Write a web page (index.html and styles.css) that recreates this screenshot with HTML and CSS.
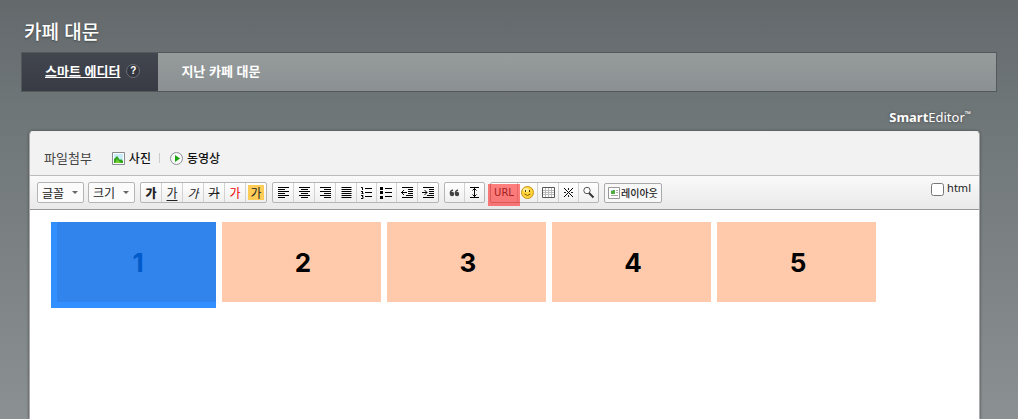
FILE: index.html
```html
<!DOCTYPE html>
<html lang="ko">
<head>
<meta charset="utf-8">
<title>카페 대문</title>
<link rel="stylesheet" href="styles.css">
</head>
<body>
<h1 class="page-title">카페 대문</h1>
<nav class="tabs">
  <div class="tab tab-active"><a class="tab-link" href="#smart">스마트 에디터</a><button class="help" type="button" aria-label="도움말">?</button></div>
  <div class="tab"><a class="tab-link" href="#past">지난 카페 대문</a></div>
</nav>
<div class="brand"><b>Smart</b><span>Editor</span><span class="tm">™</span></div>
<main class="editor">
  <div class="attach">
    <span class="attach-title">파일첨부</span>
    <button class="attach-btn" type="button">
      <svg width="13" height="13" viewBox="0 0 13 13"><path fill="#fff" stroke="#858b90" d="M.5.5h12v12H.5z"/><path fill="#c9ecfb" d="M2 2h9v9H2z"/><path fill="#30a51b" d="M2 11V7l3-3 3 4 1-1 2 2v2z"/><path fill="#74cc35" d="M3 11l2-4 4 4z"/></svg>사진
    </button>
    <span class="divider"></span>
    <button class="attach-btn" type="button">
      <svg width="13" height="13" viewBox="0 0 13 13"><circle cx="6.5" cy="6.5" r="6" fill="#f8f8f8" stroke="#8b9094"/><path fill="#18a50e" d="M5 3l5 3.500-5 3.500z"/></svg>동영상
    </button>
  </div>
  <div class="toolbar">
    <button class="drop" type="button">글꼴<i class="caret"></i></button>
    <button class="drop" type="button">크기<i class="caret"></i></button>
    <div class="group">
      <button type="button" class="tool bold">가</button>
      <button type="button" class="tool under">가</button>
      <button type="button" class="tool slant">가</button>
      <button type="button" class="tool strike">가</button>
      <button type="button" class="tool red">가</button>
      <button type="button" class="tool"><span class="mark">가</span></button>
    </div>
    <div class="group">
      <button type="button" class="tool" aria-label="왼쪽 정렬"><svg class="icon" viewBox="0 0 13 13"><path d="M1 1.500h11M1 3.500h7M1 5.500h11M1 7.500h7M1 9.500h11M1 11.500h7"/></svg></button>
      <button type="button" class="tool" aria-label="가운데 정렬"><svg class="icon" viewBox="0 0 13 13"><path d="M1 1.500h11M3 3.500h7M1 5.500h11M3 7.500h7M1 9.500h11M3 11.500h7"/></svg></button>
      <button type="button" class="tool" aria-label="오른쪽 정렬"><svg class="icon" viewBox="0 0 13 13"><path d="M1 1.500h11M5 3.500h7M1 5.500h11M5 7.500h7M1 9.500h11M5 11.500h7"/></svg></button>
      <button type="button" class="tool" aria-label="양쪽 정렬"><svg class="icon" viewBox="0 0 13 13"><path d="M1.500 1.500h10M1.500 3.500h10M1.500 5.500h10M1.500 7.500h10M1.500 9.500h10M1.500 11.500h10"/></svg></button>
      <button type="button" class="tool narrow" aria-label="번호 목록"><svg class="icon" viewBox="0 0 13 13"><path d="M5 2.500h7M5 6.500h7M5 10.500h7M1 1.500h1.500V4M1 5.500h2M2.500 6v1M1.500 7.500h2M1 9.500h2v1H2M3 11v1.500H1"/></svg></button>
      <button type="button" class="tool narrow" aria-label="글머리 목록"><svg class="icon" viewBox="0 0 13 13"><path d="M5 2.500h7M5 6.500h7M5 10.500h7"/><path fill="#000" stroke="none" d="M0 1h3v3H0zM0 5h3v3H0zM0 10h3v3H0z"/></svg></button>
      <button type="button" class="tool" aria-label="내어쓰기"><svg class="icon" viewBox="0 0 13 13"><path d="M1 1.500h11M7 3.500h5M7 5.500h5M7 7.500h5M5 9.500h7M1 11.500h11M0 6.500h6M3 4L.5 6.500 3 9"/></svg></button>
      <button type="button" class="tool" aria-label="들여쓰기"><svg class="icon" viewBox="0 0 13 13"><path d="M1 1.500h11M7 3.500h5M7 5.500h5M7 7.500h5M5 9.500h7M1 11.500h11M0 6.500h5M2.500 4L5 6.500 2.500 9"/></svg></button>
    </div>
    <div class="group">
      <button type="button" class="tool narrow" aria-label="인용구"><svg class="icon" viewBox="0 0 13 13"><g fill="#444" stroke="none"><circle cx="4" cy="8" r="2.200"/><circle cx="9" cy="8" r="2.200"/></g><path stroke="#444" stroke-width="1.300" d="M2.500 8C2 6 3 4.500 5 4M7.500 8C7 6 8 4.500 10 4"/></svg></button>
      <button type="button" class="tool narrow" aria-label="줄간격"><svg class="icon" viewBox="0 0 13 13"><path d="M2 1.500h9M2 11.500h9M6.500 2v9M4.500 4.500l2-2 2 2M4.500 8.500l2 2 2-2"/></svg></button>
    </div>
    <div class="group">
      <button type="button" class="tool url">URL</button>
      <button type="button" class="tool narrow" aria-label="이모티콘"><svg class="icon face" viewBox="0 0 13 13"><circle cx="6.500" cy="6.500" r="6" fill="#ffd63c" stroke="#c88e18"/><ellipse cx="5" cy="4" rx="3" ry="2" fill="#fff09a" stroke="none"/><path fill="#5b3500" stroke="none" d="M4 4h1v2H4zM8 4h1v2H8z"/><path stroke="#8b5200" d="M3.500 8Q6.500 11 9.500 8"/></svg></button>
      <button type="button" class="tool" aria-label="표"><svg class="icon" viewBox="0 0 13 13"><path fill="#fff" stroke="none" d="M0 1h13v11H0z"/><path stroke="#bbb" d="M3.500 2v9M6.500 2v9M9.500 2v9M1 4.500h11M1 6.500h11M1 8.500h11"/><path stroke="#555" d="M.5 1.500h12v10H.5z"/></svg></button>
      <button type="button" class="tool narrow" aria-label="특수문자"><svg class="icon" viewBox="0 0 13 13"><path d="M2 2l9 9M11 2l-9 9"/><path fill="#222" stroke="none" d="M6 2h1v2H6zM6 9h1v2H6zM2 6h2v1H2zM9 6h2v1H9z"/></svg></button>
      <button type="button" class="tool narrow" aria-label="찾기"><svg class="icon" viewBox="0 0 13 13"><circle cx="5" cy="4.500" r="3.200" fill="#fff" stroke="#555"/><path stroke="#333" stroke-width="2" d="M7 7l4.500 4.500"/></svg></button>
    </div>
    <button type="button" class="layout"><svg width="12" height="12" viewBox="0 0 12 12"><path fill="#fff" stroke="#999" d="M.5.5h11v11H.5z"/><path fill="#4caf3b" d="M3 3h4v4H3z"/><path fill="#9fc2d8" d="M3 3h2v1H3z"/><path stroke="#aaa" d="M8 3.500h2M8 5.500h2M3 8.500h7"/></svg>레이아웃</button>
    <label class="html-check"><input type="checkbox">html</label>
  </div>
  <div class="canvas">
    <div class="tile selected">1</div>
    <div class="tile">2</div>
    <div class="tile">3</div>
    <div class="tile">4</div>
    <div class="tile">5</div>
  </div>
</main>
</body>
</html>
```
FILE: styles.css
```css
* { box-sizing: border-box; }
html { height: 100%; }
body {
  height: 100%;
  margin: 0;
  padding: 17px 21px 0;
  display: flex;
  flex-direction: column;
  overflow: hidden;
  background: linear-gradient(#64696c, #6e7577 24%, #8b9092);
  font: 12px/16px "Noto Sans CJK KR", sans-serif;
  color: #222;
}
button {
  margin: 0;
  padding: 0;
  border: 0;
  background: none;
  font: inherit;
  color: inherit;
}
svg { flex: none; }
.page-title {
  margin: 0 3px 7px;
  font-size: 19px;
  line-height: 28px;
  font-weight: 500;
  color: #fff;
  text-shadow: 0 1px 2px #44484b;
}
.tabs {
  flex: none;
  display: flex;
  height: 40px;
  border: 1px solid #53585b;
  background: linear-gradient(#969b9c, #8b9092);
}
.tab {
  display: flex;
  align-items: center;
  gap: 6px;
  padding: 0 23px 2px;
}
.tab-active {
  padding-right: 18px;
  background: linear-gradient(#42464f, #383b44);
}
.tab-link {
  font-size: 13px;
  font-weight: 700;
  color: #fff;
  text-decoration: none;
}
.tab-active .tab-link { text-decoration: underline; }
.help {
  width: 14px;
  height: 14px;
  border: 1px solid #6a6e76;
  border-radius: 50%;
  background: #33363e;
  color: #fff;
  font: bold 10px/12px "Liberation Sans", sans-serif;
}
.brand {
  display: flex;
  justify-content: flex-end;
  margin: 16px 26px 5px 0;
  color: #fff;
  font: 13px/18px "Noto Sans", sans-serif;
  text-shadow: 0 0 3px #444;
}
.tm { font-size: 8px; line-height: 12px; }
.editor {
  flex: 1;
  display: flex;
  flex-direction: column;
  margin: 0 17px 0 8px;
  border: 1px solid #aaa;
  border-top-color: #eee;
  border-bottom: 0;
  border-radius: 4px 4px 0 0;
  background: #f2f2f2;
  box-shadow: 0 0 3px #44484b;
}
.attach {
  flex: none;
  display: flex;
  align-items: center;
  height: 43px;
  padding: 9px 14px 0;
}
.attach-title { margin-right: 20px; font-size: 13px; color: #444; }
.attach-btn { display: flex; align-items: center; gap: 4px; font-weight: 500; color: #111; }
.divider { width: 1px; height: 10px; margin: 0 10px 0 8px; background: #ccc; }
.toolbar {
  flex: none;
  display: flex;
  align-items: center;
  gap: 5px;
  height: 35px;
  padding: 0 7px;
  border-top: 1px solid #bbb;
  border-bottom: 1px solid #999;
  background: linear-gradient(#fafafa, #e9e9e9);
}
.drop {
  display: flex;
  align-items: center;
  justify-content: space-between;
  width: 47px;
  height: 21px;
  padding: 0 5px 0 4px;
  border: 1px solid #b5b5b5;
  border-radius: 2px;
  background: #fbfbfb;
}
.drop + .drop { margin-left: -1px; }
.caret {
  border: 3px solid transparent;
  border-top-color: #666;
  border-bottom: 0;
}
.group {
  display: flex;
  height: 21px;
  border: 1px solid #b5b5b5;
  border-radius: 2px;
  background: linear-gradient(#fff, #efefef);
}
.tool {
  display: flex;
  align-items: center;
  justify-content: center;
  width: 21px;
  border-right: 1px solid #d2d2d2;
}
.narrow { width: 20px; }
.tool:last-child { width: 20px; border-right: 0; }
.narrow:last-child { width: 19px; }
.icon { width: 13px; height: 13px; fill: none; stroke: #000; }
.bold { font-weight: 900; }
.under { text-decoration: underline; text-underline-offset: 2px; }
.slant { font-style: italic; }
.strike { text-decoration: line-through; }
.red { color: #e00; }
.mark { width: 16px; height: 15px; line-height: 15px; background: #ffcc57; }
.url {
  position: relative;
  width: 27px;
  color: #444;
  font: 10px/16px "DejaVu Sans", sans-serif;
}
.url::after {
  content: "";
  position: absolute;
  inset: 1px -3px -4px -3px;
  background: rgba(255, 0, 0, .5);
}
.face { position: relative; }
.layout {
  display: flex;
  align-items: center;
  gap: 1px;
  height: 20px;
  padding: 0 3px;
  border: 1px solid #aaa;
  border-radius: 2px;
  background: #f8f8f8;
  font-size: 10px;
  font-weight: 500;
}
.html-check {
  display: flex;
  align-items: center;
  gap: 3px;
  height: 22px;
  margin: 0 1px 9px auto;
  font: 11px/16px "Noto Sans", sans-serif;
}
.html-check input { width: 13px; height: 13px; margin: 3px 0 0; }
.canvas {
  flex: 1;
  display: flex;
  align-items: flex-start;
  gap: 6px;
  padding: 12px 21px 0;
  background: #fff;
}
.tile {
  width: 159px;
  height: 80px;
  padding-left: 3px;
  background: #ffcaab;
  color: #000;
  font: bold 26px/82px Inter, sans-serif;
  text-align: center;
}
.selected {
  width: 165px;
  height: 86px;
  border: solid #328fff;
  border-width: 0 0 6px 6px;
  background: #3284ed;
  color: #005bc9;
}
```
